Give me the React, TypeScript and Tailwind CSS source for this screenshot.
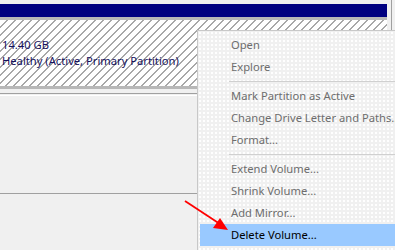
import React from "react";

const items: (string | null)[] = [
  "Open",
  "Explore",
  null,
  "Mark Partition as Active",
  "Change Drive Letter and Paths...",
  "Format...",
  null,
  "Extend Volume...",
  "Shrink Volume...",
  "Add Mirror...",
];

export default function App() {
  return (
    <div
      className="relative w-[395px] h-[250px] overflow-hidden bg-[#f0f0f0] text-[11.2px]"
      style={{ fontFamily: '"Noto Sans", "Open Sans", sans-serif' }}
    >
      {/* top volume area */}
      <div className="pt-[4px] pr-[4px] border-r border-[#a0a0a0] mr-[3px]">
        <div className="h-[13px] bg-[#000080]" />
        <div className="h-[3px] bg-[#b8b8b8]" />
        <div className="h-[66px] pl-[2px] pt-[17px] bg-[repeating-linear-gradient(135deg,#ffffff_0px,#ffffff_4.6px,#a8a8a8_4.6px,#a8a8a8_5.66px)] text-[#15105c] leading-[16px]">
          <div>14.40 GB</div>
          <div>Healthy (Active, Primary Partition)</div>
        </div>
        <div className="h-[3px] bg-[#b8b8b8]" />
      </div>
      <div className="h-[4px]" />
      <div className="h-px bg-[#a0a0a0]" />
      <div className="h-px" />
      <div className="h-px bg-white" />
      <div className="h-[97px]" />
      <div className="h-px bg-[#a0a0a0]" />

      {/* context menu */}
      <div className="absolute left-[197px] top-[30px] w-[230px] h-[230px] border border-[#c8c8c8] bg-[#f0f0f0] bg-[radial-gradient(circle,#ffffff_0.7px,transparent_0.9px)] bg-[length:4px_4px] pt-[3px] px-[2px]">
        {items.map((it, i) =>
          it === null ? (
            <div key={i} className="h-[7px] flex items-center pl-[29px]">
              <div className="h-px w-full bg-[#d0d0d0]" />
            </div>
          ) : (
            <div
              key={i}
              className="h-[22px] flex items-center pl-[31px] text-[#6d6d6d] whitespace-nowrap"
            >
              {it}
            </div>
          )
        )}
        <div className="h-[22px] flex items-center pl-[31px] text-black bg-[#99c9ff] whitespace-nowrap">
          Delete Volume...
        </div>
      </div>

      {/* red arrow */}
      <svg
        className="absolute left-0 top-0"
        width="395"
        height="250"
        viewBox="0 0 395 250"
      >
        <line x1="185" y1="201" x2="220" y2="224" stroke="#ff0000" strokeWidth="1.8" />
        <polygon points="228,230 213,228 220,218" fill="#ff0000" />
      </svg>
    </div>
  );
}
